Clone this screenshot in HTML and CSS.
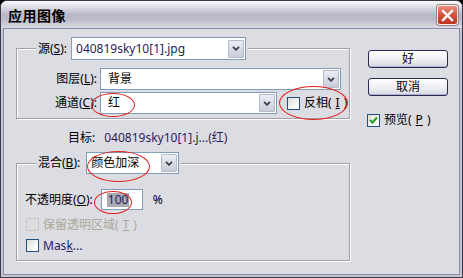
FILE: index.html
```html
<!DOCTYPE html>
<html lang="zh-CN">
<head>
    <meta charset="UTF-8">
    <title>应用图像</title>
    <link rel="stylesheet" href="styles.css">
</head>
<body>
    <div class="window">
        <!-- Title bar -->
        <div class="titlebar">
            <span class="title">应用图像</span>
            <span class="close">
                <svg width="13" height="13" viewBox="0 0 13 13"><path d="M2 2 L11 11 M11 2 L2 11" stroke="#fff" stroke-width="2.4" stroke-linecap="square"/></svg>
            </span>
        </div>

        <div class="frame">
            <div class="body">
                <div class="main">
                    <!-- Source group -->
                    <fieldset class="group group-source">
                        <legend class="legend">
                            <span class="lbl">源(<u>S</u>):</span>
                            <div class="combo combo-source">
                                <span class="val latin">040819sky10[1].jpg</span>
                                <span class="drop"><svg width="8" height="5" viewBox="0 0 8 5"><path d="M1 0.8 L4 3.8 L7 0.8" fill="none" stroke="#3c3c48" stroke-width="1.8"/></svg></span>
                            </div>
                        </legend>
                        <div class="row">
                            <span class="lbl lbl-col">图层(<u>L</u>):</span>
                            <div class="combo combo-layer">
                                <span class="val">背景</span>
                                <span class="drop"><svg width="8" height="5" viewBox="0 0 8 5"><path d="M1 0.8 L4 3.8 L7 0.8" fill="none" stroke="#3c3c48" stroke-width="1.8"/></svg></span>
                            </div>
                        </div>
                        <div class="row">
                            <span class="lbl lbl-col">通道(<u>C</u>):</span>
                            <div class="combo combo-channel">
                                <span class="val">红</span>
                                <span class="drop"><svg width="8" height="5" viewBox="0 0 8 5"><path d="M1 0.8 L4 3.8 L7 0.8" fill="none" stroke="#3c3c48" stroke-width="1.8"/></svg></span>
                            </div>
                            <span class="check check-invert"><span class="box"></span>反相(<u>I</u>)</span>
                        </div>
                    </fieldset>

                    <div class="target"><span>目标:</span><span class="latin">040819sky10[1].j...(红)</span></div>

                    <!-- Blend group -->
                    <fieldset class="group group-blend">
                        <legend class="legend">
                            <span class="lbl">混合(<u>B</u>):</span>
                            <div class="combo combo-blend">
                                <span class="val">颜色加深</span>
                                <span class="drop"><svg width="8" height="5" viewBox="0 0 8 5"><path d="M1 0.8 L4 3.8 L7 0.8" fill="none" stroke="#3c3c48" stroke-width="1.8"/></svg></span>
                            </div>
                        </legend>
                        <div class="opacity-row">
                            <span class="lbl">不透明度(<u>O</u>):</span>
                            <span class="field"><span class="sel latin">100</span></span>
                            <span class="pct">%</span>
                        </div>
                        <span class="check check-row disabled"><span class="box"></span>保留透明区域(<u>T</u>)</span>
                        <span class="check check-row"><span class="box"></span><span class="latin">Mas<u>k</u>...</span></span>
                    </fieldset>
                </div>

                <div class="side">
                    <span class="btn">好</span>
                    <span class="btn">取消</span>
                    <span class="check check-preview">
                        <span class="box"><svg width="11" height="11" viewBox="0 0 11 11"><path d="M2 5 L4.5 7.5 L9 2.5" fill="none" stroke="#21a121" stroke-width="2"/></svg></span>预览(<u>P</u>)
                    </span>
                </div>
            </div>
        </div>

        <!-- Red annotation marks drawn over the dialog -->
        <div class="mark mark-channel"></div>
        <div class="mark mark-invert"></div>
        <div class="mark mark-blend"></div>
        <div class="mark mark-opacity"></div>
    </div>
</body>
</html>
```

FILE: styles.css
```css
* {
    box-sizing: border-box;
}
body {
    margin: 0;
    background-color: #000;
    font-family: "Noto Sans", "Noto Sans CJK SC", sans-serif;
    font-size: 12px;
    line-height: 14px;
    color: #000;
}
u {
    text-decoration: underline;
    text-underline-offset: 1px;
}
.latin {
    color: #2a1c5c;
}
.window {
    width: 463px;
    height: 278px;
    border: 1px solid #3a3a48;
    border-radius: 7px 7px 0 0;
    background-color: #c4c4d0;
    overflow: hidden;
    position: relative;
    display: flex;
    flex-direction: column;
}
/* Title bar */
.titlebar {
    height: 27px;
    flex: none;
    display: flex;
    align-items: center;
    justify-content: space-between;
    padding: 1px 4px 0 7px;
    background: linear-gradient(#fbfbfd 0%, #dedee8 22%, #b8b8c8 50%, #bcbccc 70%, #dadae4 100%);
}
.title {
    font-family: "Noto Sans CJK SC", sans-serif;
    font-weight: bold;
    font-size: 14px;
    letter-spacing: 0.5px;
}
.close {
    width: 21px;
    height: 20px;
    border: 1px solid #f4f0f0;
    border-radius: 3px;
    background: linear-gradient(#ec8e7c, #d24c38 55%, #b83422);
    display: flex;
    align-items: center;
    justify-content: center;
    box-shadow: 0 0 0 1px #a08080;
}
.frame {
    flex: 1;
    display: flex;
    padding: 0 2px 2px;
}
.body {
    flex: 1;
    display: flex;
    border: 1px solid #8c8ca8;
    background-color: #dcdce3;
}
.main {
    width: 346px;
    padding: 8px 0 0 12px;
}
/* Group boxes */
.group {
    margin: 0;
    width: 334px;
    min-width: 0;
    border: 1px solid #a0a0a8;
    box-shadow: inset 1px 1px 0 #fff, 1px 1px 0 #fff;
}
.legend {
    display: flex;
    align-items: center;
    gap: 4px;
    margin-left: 19px;
    padding: 0 2px;
    background-color: #dcdce3;
}
.group-source {
    padding: 8px 0 4px 0;
}
.group-blend {
    margin-top: 7px;
    padding: 15px 0 8px 0;
}
.group-blend .legend {
    gap: 6px;
}
.row {
    display: flex;
    align-items: center;
    height: 22px;
    margin-bottom: 2px;
}
.row:last-child {
    margin-bottom: 0;
}
.lbl-col {
    width: 80px;
    text-align: right;
    margin-right: 3px;
}
/* Combo boxes */
.combo {
    display: flex;
    align-items: center;
    height: 22px;
    background-color: #fff;
    border: 1px solid #7f9db9;
    padding: 0 1px 0 4px;
}
.combo .val {
    flex: 1;
    white-space: nowrap;
}
.combo-source {
    width: 175px;
    height: 23px;
}
.combo-layer {
    width: 241px;
    padding-left: 7px;
}
.combo-channel {
    width: 177px;
    padding-left: 7px;
}
.combo-blend {
    width: 93px;
}
.drop {
    width: 16px;
    height: 18px;
    border: 1px solid #b4bacb;
    border-radius: 1px;
    background: linear-gradient(#eceef4, #c9ccd8);
    display: flex;
    align-items: center;
    justify-content: center;
}
/* Checkboxes */
.check {
    display: flex;
    align-items: center;
    gap: 4px;
    white-space: nowrap;
}
.box {
    width: 13px;
    height: 13px;
    flex: none;
    border: 1px solid #1c5180;
    background: linear-gradient(135deg, #dcdcd7, #fff 80%);
    display: flex;
    align-items: center;
    justify-content: center;
}
.check-invert {
    margin-left: 10px;
}
.check-row {
    margin: 8px 0 0 9px;
    height: 13px;
}
.check-row.disabled {
    color: #aca899;
}
.check-row.disabled .box {
    border-color: #cac8bb;
    background: none;
}
/* Target line */
.target {
    display: flex;
    gap: 9px;
    margin: 12px 0 0 52px;
}
/* Opacity */
.opacity-row {
    display: flex;
    align-items: center;
    padding-left: 8px;
}
.field {
    width: 42px;
    height: 21px;
    margin-left: 8px;
    border: 1px solid #7f9db9;
    background-color: #fff;
    display: flex;
    align-items: center;
    padding-left: 5px;
}
.sel {
    background-color: #a9a9b2;
    padding: 0 1px;
}
.pct {
    margin-left: 10px;
}
/* Side buttons */
.side {
    margin-left: 18px;
    padding-top: 21px;
    display: flex;
    flex-direction: column;
}
.btn {
    width: 80px;
    height: 18px;
    margin-bottom: 10px;
    border: 1px solid #2a2a58;
    border-radius: 3px;
    background: linear-gradient(#ffffff 0%, #f2f2f6 45%, #d8d8e4 100%);
    box-shadow: inset 0 -1px 0 #b0b0cc;
    display: flex;
    align-items: center;
    justify-content: center;
}
.check-preview {
    margin: 7px 0 0 -1px;
}
/* Red annotation ellipses */
.mark {
    position: absolute;
    border: 1.5px solid #e3201c;
    border-radius: 50%;
}
.mark-channel {
    left: 90px;
    top: 92px;
    width: 44px;
    height: 24px;
}
.mark-invert {
    left: 278px;
    top: 85px;
    width: 69px;
    height: 34px;
}
.mark-blend {
    left: 86px;
    top: 150px;
    width: 63px;
    height: 31px;
}
.mark-opacity {
    left: 93px;
    top: 190px;
    width: 38px;
    height: 23px;
}
```
